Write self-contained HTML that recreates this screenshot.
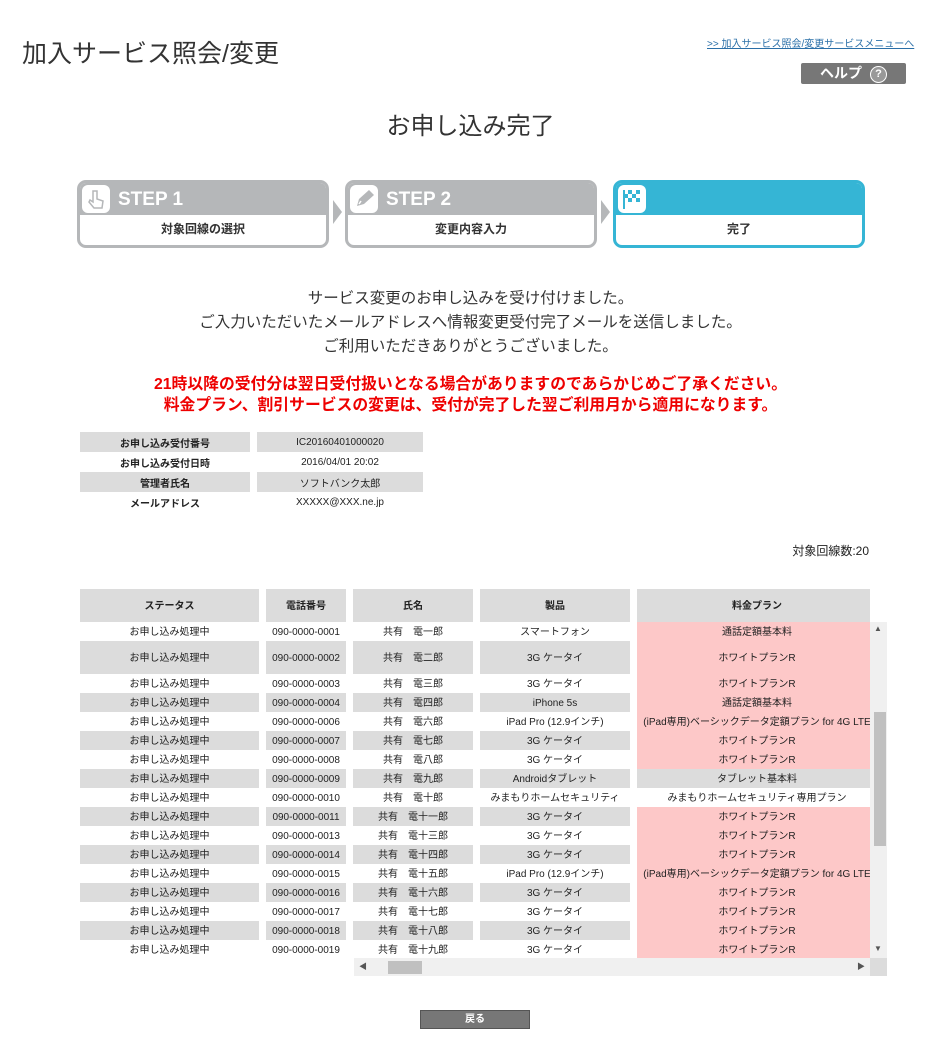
<!DOCTYPE html>
<html><head><meta charset="utf-8"><style>
body{margin:0;width:941px;height:1055px;background:#fff;font-family:"Liberation Sans","Noto Sans CJK JP",sans-serif;color:#222;position:relative;overflow:hidden}
.a{position:absolute}
h1{position:absolute;left:22px;top:34px;margin:0;font-size:25px;font-weight:normal;color:#333}
.link{left:707px;top:35px;font-size:10px;color:#2a6fa8;text-decoration:underline}
.help{left:801px;top:63px;width:105px;height:21px;background:#777;border-radius:2px;color:#fff;font-size:14px;font-weight:bold;text-align:center;line-height:21px}
.help span{display:inline-block;width:15px;height:15px;border-radius:50%;border:1px solid #fff;line-height:15px;font-size:11px;margin-left:8px;background:#999;vertical-align:middle}
.step{position:absolute;top:180px;width:246px;height:62px;border:3px solid #b5b7b9;border-radius:9px;overflow:hidden;background:#fff}
.step .t{height:32px;background:#b5b7b9;color:#fff;font-weight:bold;font-size:19px;line-height:34px;padding-left:38px}
.step .b{text-align:center;font-size:12px;font-weight:bold;line-height:28px;color:#333}
.step .ic{position:absolute;left:2px;top:2px;width:28px;height:28px;border-radius:6px;background:#fff}
.arr{position:absolute;top:200px;width:0;height:0;border-top:12px solid transparent;border-bottom:12px solid transparent;border-left:9px solid #b5b7b9}
.msg{left:0;width:941px;text-align:center;font-size:15.5px;line-height:24px;color:#333}
.red{left:0;width:941px;text-align:center;font-size:15.8px;line-height:21px;color:#e00;font-weight:bold}
.info{left:80px;top:432px;border-collapse:separate;border-spacing:7px 0;margin-left:-7px;font-size:10px}
.info td{height:20px;text-align:center;padding:0}
.info td.k{width:170px;font-weight:bold}
.info td.v{width:166px}
.g{background:#dcdcdc}
.p{background:#fdc8c8}
.wrap{position:absolute;left:80px;top:589px;width:790px;height:369px;overflow:hidden}
.tb{border-collapse:separate;border-spacing:7px 0;margin-left:-7px;font-size:10px;table-layout:fixed;width:811px}
.tb td,.tb th{padding:0;text-align:center;white-space:nowrap;overflow:hidden;height:19px;vertical-align:middle;line-height:19px}
.tb td{padding-top:2px;height:17px;line-height:17px}
.tb th{height:33px;background:#dcdcdc;font-weight:bold;padding-top:2px;height:31px}
</style></head><body>
<h1>加入サービス照会/変更</h1>
<div class="a link">&gt;&gt; 加入サービス照会/変更サービスメニューへ</div>
<div class="a help">ヘルプ<span>?</span></div>
<div class="a" style="left:0;width:941px;top:106px;text-align:center;font-size:24px;color:#333">お申し込み完了</div>

<div class="step" style="left:77px"><div class="ic"><svg width="28" height="28"><path d="M11 6v11l-3-2-1 2 5 6h8l1-7-6-2V6z" fill="none" stroke="#b5b7b9" stroke-width="1.5"/></svg></div><div class="t">STEP 1</div><div class="b">対象回線の選択</div></div>
<div class="arr" style="left:333px"></div>
<div class="step" style="left:345px"><div class="ic"><svg width="28" height="28"><path d="M7 21l2-7 10-9 5 5-10 9z" fill="#b5b7b9"/><path d="M9 19l2-3" stroke="#fff" stroke-width="1.5"/></svg></div><div class="t">STEP 2</div><div class="b">変更内容入力</div></div>
<div class="arr" style="left:601px"></div>
<div class="step" style="left:613px;border-color:#35b5d5"><div class="ic"><svg width="28" height="28"><rect x="6" y="5" width="16" height="12" fill="#35b5d5"/><path d="M6 5h4v4h-4zM14 5h4v4h-4zM10 9h4v4h-4zM18 9h4v4h-4zM6 13h4v4h-4zM14 13h4v4h-4z" fill="#fff"/><rect x="5" y="5" width="2" height="19" fill="#35b5d5"/></svg></div><div class="t" style="background:#35b5d5"></div><div class="b">完了</div></div>

<div class="a msg" style="top:287px">サービス変更のお申し込みを受け付けました。<br>ご入力いただいたメールアドレスへ情報変更受付完了メールを送信しました。<br>ご利用いただきありがとうございました。</div>
<div class="a red" style="top:374px">21時以降の受付分は翌日受付扱いとなる場合がありますのであらかじめご了承ください。<br>料金プラン、割引サービスの変更は、受付が完了した翌ご利用月から適用になります。</div>

<table class="a info">
<tr><td class="k g">お申し込み受付番号</td><td class="v g">IC20160401000020</td></tr>
<tr><td class="k">お申し込み受付日時</td><td class="v">2016/04/01 20:02</td></tr>
<tr><td class="k g">管理者氏名</td><td class="v g">ソフトバンク太郎</td></tr>
<tr><td class="k">メールアドレス</td><td class="v">XXXXX@XXX.ne.jp</td></tr>
</table>
<div class="a" style="right:72px;top:542px;font-size:12px">対象回線数:20</div>

<div class="wrap"><table class="tb">
<colgroup><col style="width:179px"><col style="width:80px"><col style="width:120px"><col style="width:150px"><col style="width:240px"></colgroup>
<tr><th>ステータス</th><th>電話番号</th><th>氏名</th><th>製品</th><th>料金プラン</th></tr>
<tr><td>お申し込み処理中</td><td>090-0000-0001</td><td>共有　電一郎</td><td>スマートフォン</td><td class="p">通話定額基本料</td></tr>
<tr class="g"><td style="height:31px">お申し込み処理中</td><td>090-0000-0002</td><td>共有　電二郎</td><td>3G ケータイ</td><td class="p">ホワイトプランR</td></tr>
<tr><td>お申し込み処理中</td><td>090-0000-0003</td><td>共有　電三郎</td><td>3G ケータイ</td><td class="p">ホワイトプランR</td></tr>
<tr class="g"><td>お申し込み処理中</td><td>090-0000-0004</td><td>共有　電四郎</td><td>iPhone 5s</td><td class="p">通話定額基本料</td></tr>
<tr><td>お申し込み処理中</td><td>090-0000-0006</td><td>共有　電六郎</td><td>iPad Pro (12.9インチ)</td><td class="p">(iPad専用)ベーシックデータ定額プラン for 4G LTE</td></tr>
<tr class="g"><td>お申し込み処理中</td><td>090-0000-0007</td><td>共有　電七郎</td><td>3G ケータイ</td><td class="p">ホワイトプランR</td></tr>
<tr><td>お申し込み処理中</td><td>090-0000-0008</td><td>共有　電八郎</td><td>3G ケータイ</td><td class="p">ホワイトプランR</td></tr>
<tr class="g"><td>お申し込み処理中</td><td>090-0000-0009</td><td>共有　電九郎</td><td>Androidタブレット</td><td>タブレット基本料</td></tr>
<tr><td>お申し込み処理中</td><td>090-0000-0010</td><td>共有　電十郎</td><td>みまもりホームセキュリティ</td><td>みまもりホームセキュリティ専用プラン</td></tr>
<tr class="g"><td>お申し込み処理中</td><td>090-0000-0011</td><td>共有　電十一郎</td><td>3G ケータイ</td><td class="p">ホワイトプランR</td></tr>
<tr><td>お申し込み処理中</td><td>090-0000-0013</td><td>共有　電十三郎</td><td>3G ケータイ</td><td class="p">ホワイトプランR</td></tr>
<tr class="g"><td>お申し込み処理中</td><td>090-0000-0014</td><td>共有　電十四郎</td><td>3G ケータイ</td><td class="p">ホワイトプランR</td></tr>
<tr><td>お申し込み処理中</td><td>090-0000-0015</td><td>共有　電十五郎</td><td>iPad Pro (12.9インチ)</td><td class="p">(iPad専用)ベーシックデータ定額プラン for 4G LTE</td></tr>
<tr class="g"><td>お申し込み処理中</td><td>090-0000-0016</td><td>共有　電十六郎</td><td>3G ケータイ</td><td class="p">ホワイトプランR</td></tr>
<tr><td>お申し込み処理中</td><td>090-0000-0017</td><td>共有　電十七郎</td><td>3G ケータイ</td><td class="p">ホワイトプランR</td></tr>
<tr class="g"><td>お申し込み処理中</td><td>090-0000-0018</td><td>共有　電十八郎</td><td>3G ケータイ</td><td class="p">ホワイトプランR</td></tr>
<tr><td>お申し込み処理中</td><td>090-0000-0019</td><td>共有　電十九郎</td><td>3G ケータイ</td><td class="p">ホワイトプランR</td></tr>
</table></div>
<div class="a" style="left:870px;top:622px;width:17px;height:336px;background:#f0f0f0"></div>
<div class="a" style="left:874px;top:712px;width:12px;height:134px;background:#c0c0c0"></div>
<div class="a" style="left:874px;top:624px;font-size:8px;color:#555">▲</div>
<div class="a" style="left:874px;top:944px;font-size:8px;color:#555">▼</div>
<div class="a" style="left:354px;top:958px;width:516px;height:18px;background:#f0f0f0"></div>
<div class="a" style="left:870px;top:958px;width:17px;height:18px;background:#dcdcdc"></div>
<div class="a" style="left:388px;top:961px;width:34px;height:13px;background:#c0c0c0"></div>
<div class="a" style="left:359px;top:961px;font-size:8px;color:#555">◀</div>
<div class="a" style="left:857px;top:961px;font-size:8px;color:#555">▶</div>

<div class="a" style="left:420px;top:1010px;width:108px;height:17px;background:#777;border:1px solid #555;color:#fff;font-size:10px;font-weight:bold;text-align:center;line-height:17px">戻る</div>
</body></html>
